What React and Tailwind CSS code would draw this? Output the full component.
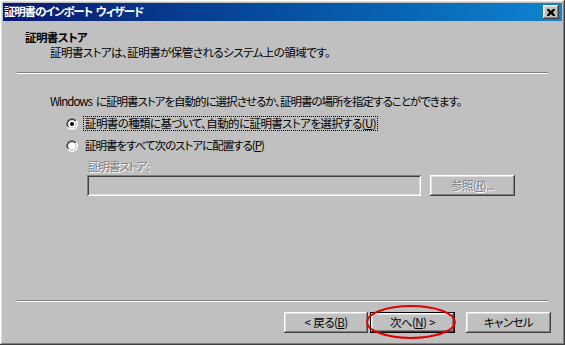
import React from 'react';

const font = "font-['Noto_Sans_CJK_JP','Noto_Sans',sans-serif] [font-feature-settings:'palt']";

const raised =
  'shadow-[inset_-1px_-1px_#404040,inset_1px_1px_#ffffff,inset_-2px_-2px_#808080,inset_2px_2px_#dfdfdf]';

const Button = ({ children, className = '', isDefault = false, disabled = false }) => (
  <div
    className={`flex h-[21px] items-center justify-center bg-[#c0c0c0] text-[11.5px] leading-none tracking-[-0.6px] ${
      isDefault ? 'border border-black' : ''
    } ${raised} ${disabled ? 'text-[#808080] [text-shadow:1px_1px_#ffffff]' : 'text-black'} ${className}`}
  >
    {children}
  </div>
);

const Radio = ({ checked }) => (
  <svg width="12" height="12" viewBox="0 0 12 12" className="shrink-0">
    <path d="M4 0h4M2 1h2M8 1h2M1 2h1M1 3h1M0 4h1M0 5h1M0 6h1M0 7h1" stroke="#808080" strokeWidth="1" transform="translate(0 0.5)" />
    <path d="M4 1h4M2 2h2M8 2h2M2 3h1M1 4h1M1 5h1M1 6h1M1 7h1M2 8h1" stroke="#404040" transform="translate(0 0.5)" />
    <path d="M10 2h1M10 3h1M11 4h1M11 5h1M11 6h1M11 7h1M10 8h1M10 9h1M2 10h2M8 10h2M4 11h4" stroke="#ffffff" transform="translate(0 0.5)" />
    <path d="M9 3h1M10 4h1M10 5h1M10 6h1M10 7h1M9 8h1M2 9h2M8 9h2M4 10h4" stroke="#dfdfdf" transform="translate(0 0.5)" />
    <circle cx="6" cy="6" r="3.6" fill="#ffffff" />
    {checked && <circle cx="6" cy="6" r="2" fill="#000000" />}
  </svg>
);

const Separator = () => (
  <div className="mx-[14px] h-[2px] border-t border-t-[#808080] border-b border-b-white" />
);

export default function App() {
  return (
    <div className={`relative h-[345px] w-[565px] bg-[#c0c0c0] p-[3px] text-black ${font} ${raised}`}>
      <div className="flex h-full flex-col">
        {/* Title bar */}
        <div className="flex h-[18px] items-center justify-between bg-gradient-to-r from-[#0a1870] to-[#1084d0] pl-[1px] pr-[3px]">
          <span className="text-[11.5px] font-bold leading-none tracking-[-1.2px] text-white">
            証明書のインポート<span className="ml-[4px]">ウィザード</span>
          </span>
          <div className={`flex h-[14px] w-[16px] items-center justify-center bg-[#c0c0c0] ${raised}`}>
            <svg width="8" height="7" viewBox="0 0 8 7">
              <path d="M0 0h2l2 2 2-2h2v1L6 3.5 8 6v1H6L4 5 2 7H0V6l2-2.5L0 1z" fill="#000" />
            </svg>
          </div>
        </div>

        {/* Header */}
        <div className="flex h-[51px] flex-col pl-[22px] pt-[9px] text-[11.5px]">
          <div className="font-bold leading-[15px] tracking-[-0.6px]">証明書ストア</div>
          <div className="pl-[25px] leading-[15px] tracking-[-0.55px]">
            証明書ストアは、証明書が保管されるシステム上の領域です。
          </div>
        </div>
        <Separator />

        {/* Body */}
        <div className="flex flex-1 flex-col pl-[47px] pt-[20px] text-[11.5px]">
          <div className="leading-[15px] tracking-[-1px]">
            Windows<span className="ml-[4px]">に証明書ストアを自動的に選択させるか、証明書の場所を指定することができます。</span>
          </div>
          <div className="mt-[7px] flex flex-col gap-[7px] pl-[16px]">
            <div className="flex items-center gap-[5px]">
              <Radio checked />
              <span className="border border-dotted border-black px-[1px] leading-[13px] tracking-[-0.6px]">
                証明書の種類に基づいて、自動的に証明書ストアを選択する(<u>U</u>)
              </span>
            </div>
            <div className="flex items-center gap-[5px]">
              <Radio />
              <span className="px-[2px] leading-[15px] tracking-[-1px]">
                証明書をすべて次のストアに配置する(<u>P</u>)
              </span>
            </div>
          </div>
          <div className="mt-[6px] flex flex-col pl-[37px]">
            <div className="pl-[1px] leading-[14px] tracking-[-1px] text-[#808080] [text-shadow:1px_1px_#ffffff]">証明書ストア:</div>
            <div className="mt-[2px] flex items-center gap-[9px]">
              <div className="h-[21px] w-[334px] bg-[#c0c0c0] shadow-[inset_1px_1px_#808080,inset_-1px_-1px_#ffffff,inset_2px_2px_#404040,inset_-2px_-2px_#dfdfdf]" />
              <Button disabled className="w-[85px]">
                参照(<u>R</u>)...
              </Button>
            </div>
          </div>
        </div>

        <Separator />
        {/* Footer buttons */}
        <div className="flex h-[40px] items-start justify-end pr-[11px] pt-[10px]">
          <Button className="w-[84px]">
            &lt;<span className="ml-[3px]">戻る(<u>B</u>)</span>
          </Button>
          <Button isDefault className="ml-[2px] w-[85px]">
            次へ(<u>N</u>)<span className="ml-[3px]">&gt;</span>
          </Button>
          <Button className="ml-[11px] w-[85px]">キャンセル</Button>
        </div>
      </div>

      {/* Red annotation ellipse */}
      <svg className="pointer-events-none absolute left-[364px] top-[302px]" width="94" height="40" viewBox="0 0 94 40">
        <ellipse cx="47" cy="20" rx="44" ry="16" fill="none" stroke="#e00000" strokeWidth="2" />
      </svg>
    </div>
  );
}
